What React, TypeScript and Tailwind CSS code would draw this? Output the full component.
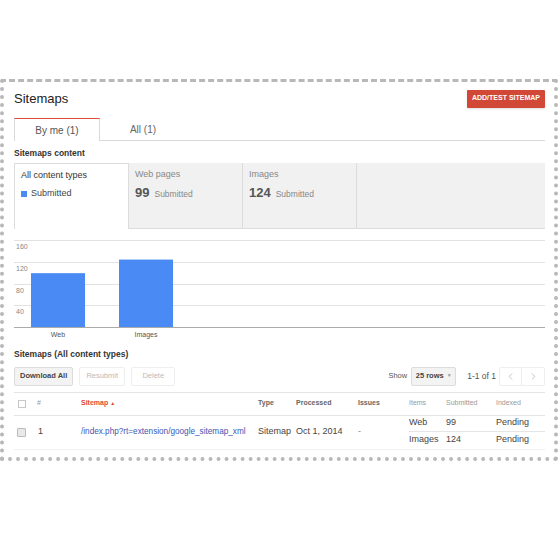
import React from "react";
import { ChevronLeft, ChevronRight } from "lucide-react";

const font = "font-[family-name:'Liberation_Sans',Arial,sans-serif]";

const ContentCard = ({ title, count }: { title: string; count: string }) => (
  <div className="w-[114px] bg-[#f1f1f1] border-l border-b border-[#dcdcdc] px-[6px] pt-[5px]">
    <div className="text-[9px] text-[#888]">{title}</div>
    <div className="flex items-baseline gap-[5px] mt-[2px]">
      <span className="text-[13px] font-bold text-[#555]">{count}</span>
      <span className="text-[8.5px] text-[#888]">Submitted</span>
    </div>
  </div>
);

const Chart = () => {
  const base = 87;
  const scale = 87 / 160;
  const grid = [160, 120, 80, 40];
  return (
    <svg width="531" height="100" viewBox="0 0 531 100" className="block">
      {grid.map((v) => {
        const y = Math.round(base - v * scale) + 0.5;
        return (
          <g key={v}>
            <line x1="0" x2="531" y1={y} y2={y} stroke="#e2e2e2" />
            <text x="2" y={y + 8} fontSize="7" fill="#888" fontFamily="Liberation Sans, Arial, sans-serif">
              {v}
            </text>
          </g>
        );
      })}
      <rect x="17" y={base - 99 * scale} width="54" height={99 * scale} fill="#4a8af4" />
      <rect x="105" y={base - 124 * scale} width="54" height={124 * scale} fill="#4a8af4" />
      <line x1="0" x2="531" y1={base + 0.5} y2={base + 0.5} stroke="#aaa" />
      <text x="44" y="97" fontSize="7" fill="#555" textAnchor="middle" fontFamily="Liberation Sans, Arial, sans-serif">
        Web
      </text>
      <text x="132" y="97" fontSize="7" fill="#555" textAnchor="middle" fontFamily="Liberation Sans, Arial, sans-serif">
        Images
      </text>
    </svg>
  );
};

export default function App() {
  return (
    <div className={`w-[560px] h-[540px] bg-white pt-[79px] ${font}`}>
      <div className="w-[558px] h-[382px] overflow-hidden border-4 border-dotted border-[#b8b8b8] [border-top-style:dashed] [border-top-width:3px] pl-[10px] pr-[9px] pt-[7px]">
        {/* Header */}
        <div className="flex items-center justify-between h-[19px]">
          <h1 className="text-[13px] text-[#222] leading-none">Sitemaps</h1>
          <button className="h-[18px] px-[5px] bg-[#d14836] text-white text-[7px] font-bold rounded-[1px] shadow-sm">
            ADD/TEST SITEMAP
          </button>
        </div>

        {/* Tabs */}
        <div className="flex mt-[10px] h-[23px] border-b border-[#dadada]">
          <div className="w-[86px] -mb-px bg-white border-t border-t-[#dd4b39] border-x border-[#dadada] flex items-center justify-center text-[10px] text-[#555]">
            By me (1)
          </div>
          <div className="w-[86px] flex items-center justify-center text-[10px] text-[#666]">All (1)</div>
        </div>

        <div className="mt-[6px] text-[8.5px] font-bold text-[#333]">Sitemaps content</div>

        {/* Content types */}
        <div className="flex h-[66px] mt-[3px]">
          <div className="w-[114px] bg-white border-t border-l border-[#dcdcdc] px-[6px] pt-[5px]">
            <div className="text-[9px] text-[#333]">All content types</div>
            <div className="flex items-center gap-[4px] mt-[5px]">
              <span className="w-[6px] h-[6px] bg-[#4a8af4]" />
              <span className="text-[9px] text-[#444]">Submitted</span>
            </div>
          </div>
          <ContentCard title="Web pages" count="99" />
          <ContentCard title="Images" count="124" />
          <div className="flex-1 bg-[#f1f1f1] border-l border-b border-[#dcdcdc]" />
        </div>

        {/* Chart */}
        <div className="mt-[11px]">
          <Chart />
        </div>

        <div className="mt-[8px] text-[8.5px] font-bold text-[#333]">Sitemaps (All content types)</div>

        {/* Toolbar */}
        <div className="flex items-center justify-between mt-[6px]">
          <div className="flex gap-[6px]">
            <button className="h-[19px] px-[5px] bg-[#f3f3f3] border border-[#dcdcdc] rounded-[2px] text-[7.5px] font-bold text-[#444]">
              Download All
            </button>
            <button className="h-[19px] w-[46px] bg-white border border-[#eee] rounded-[2px] text-[7.5px] text-[#bbb]">
              Resubmit
            </button>
            <button className="h-[19px] w-[44px] bg-white border border-[#eee] rounded-[2px] text-[7.5px] text-[#bbb]">
              Delete
            </button>
          </div>
          <div className="flex items-center">
            <span className="text-[7.5px] text-[#555] mr-[4px]">Show</span>
            <button className="h-[19px] w-[45px] bg-[#f3f3f3] border border-[#dcdcdc] rounded-[2px] text-[7.5px] font-bold text-[#444] flex items-center justify-center gap-[3px]">
              25 rows <span className="text-[5px] text-[#999]">▼</span>
            </button>
            <span className="text-[8.5px] text-[#555] ml-[11px] mr-[3px]">1-1 of 1</span>
            <div className="flex border border-[#eee] rounded-[2px] h-[19px]">
              <span className="w-[22px] flex items-center justify-center border-r border-[#eee]">
                <ChevronLeft className="w-[11px] h-[11px] text-[#aaa]" strokeWidth={1.5} />
              </span>
              <span className="w-[22px] flex items-center justify-center">
                <ChevronRight className="w-[11px] h-[11px] text-[#aaa]" strokeWidth={1.5} />
              </span>
            </div>
          </div>
        </div>

        {/* Table */}
        <div className="mt-[6px] border-t border-[#e5e5e5]">
          <div className="grid grid-cols-[23px_44px_177px_38px_62px_51px_37px_50px_49px] h-[23px] items-center border-b border-[#e5e5e5] text-[7px]">
            <span className="pl-[4px]">
              <span className="block w-[8px] h-[8px] border border-[#c8c8c8] bg-white" />
            </span>
            <span className="text-[#999]">#</span>
            <span className="text-[#dd4b39] font-bold">
              Sitemap <span className="text-[5px]">▲</span>
            </span>
            <span className="text-[#666] font-bold">Type</span>
            <span className="text-[#666] font-bold">Processed</span>
            <span className="text-[#666] font-bold">Issues</span>
            <span className="text-[#999]">Items</span>
            <span className="text-[#999]">Submitted</span>
            <span className="text-[#999]">Indexed</span>
          </div>
          <div className="grid grid-cols-[23px_44px_177px_38px_62px_51px_136px] h-[34px] items-center border-b border-[#f0f0f0] text-[9px] text-[#444]">
            <span className="pl-[3px]">
              <span className="block w-[9px] h-[9px] border border-[#bbb] bg-[#e8e8e8] rounded-[1px]" />
            </span>
            <span className="pl-[1px]">1</span>
            <span className="text-[#3a57b3] text-[8.2px] whitespace-nowrap">/index.php?rt=extension/google_sitemap_xml</span>
            <span>Sitemap</span>
            <span>Oct 1, 2014</span>
            <span className="text-[#888]">-</span>
            <div className="flex flex-col h-full">
              <div className="grid grid-cols-[37px_50px_49px] h-[16px] items-center border-b border-[#e5e5e5]">
                <span>Web</span>
                <span>99</span>
                <span>Pending</span>
              </div>
              <div className="grid grid-cols-[37px_50px_49px] flex-1 items-center">
                <span>Images</span>
                <span>124</span>
                <span>Pending</span>
              </div>
            </div>
          </div>
        </div>
      </div>
    </div>
  );
}
